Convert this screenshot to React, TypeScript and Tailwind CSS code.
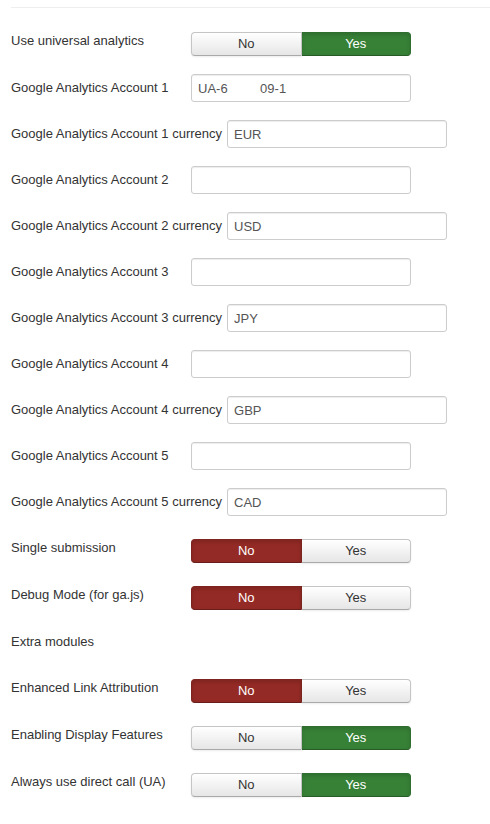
import React from 'react';

type Row =
  | { kind: 'toggle'; label: string; value: 'yes' | 'no' }
  | { kind: 'input'; label: string; value: string }
  | { kind: 'empty'; label: string };

const rows: Row[] = [
  { kind: 'toggle', label: 'Use universal analytics', value: 'yes' },
  { kind: 'input', label: 'Google Analytics Account 1', value: 'UA-6         09-1' },
  { kind: 'input', label: 'Google Analytics Account 1 currency', value: 'EUR' },
  { kind: 'input', label: 'Google Analytics Account 2', value: '' },
  { kind: 'input', label: 'Google Analytics Account 2 currency', value: 'USD' },
  { kind: 'input', label: 'Google Analytics Account 3', value: '' },
  { kind: 'input', label: 'Google Analytics Account 3 currency', value: 'JPY' },
  { kind: 'input', label: 'Google Analytics Account 4', value: '' },
  { kind: 'input', label: 'Google Analytics Account 4 currency', value: 'GBP' },
  { kind: 'input', label: 'Google Analytics Account 5', value: '' },
  { kind: 'input', label: 'Google Analytics Account 5 currency', value: 'CAD' },
  { kind: 'toggle', label: 'Single submission', value: 'no' },
  { kind: 'toggle', label: 'Debug Mode (for ga.js)', value: 'no' },
  { kind: 'empty', label: 'Extra modules' },
  { kind: 'toggle', label: 'Enhanced Link Attribution', value: 'no' },
  { kind: 'toggle', label: 'Enabling Display Features', value: 'yes' },
  { kind: 'toggle', label: 'Always use direct call (UA)', value: 'yes' },
];

const idle =
  'bg-gradient-to-b from-white to-[#e6e6e6] text-[#333] border-[#c5c5c5] border-b-[#a9a9a9] shadow-[inset_0_1px_0_rgba(255,255,255,0.3),0_1px_2px_rgba(0,0,0,0.08)]';

function YesNo({ value }: { value: 'yes' | 'no' }) {
  const noActive = value === 'no';
  return (
    <div className="mt-[5px] flex h-[24px] w-[220px]">
      <button
        className={`flex-1 rounded-l-[4px] border text-[13px] leading-[22px] ${
          noActive
            ? 'bg-[#942a25] text-white border-[#7d2420] border-b-[#6a1e1b] shadow-[inset_0_2px_4px_rgba(0,0,0,0.15)]'
            : idle
        }`}
      >
        No
      </button>
      <button
        className={`flex-1 rounded-r-[4px] border border-l-0 text-[13px] leading-[22px] ${
          !noActive
            ? 'bg-[#378137] text-white border-[#2f6e2f] border-b-[#275c27] shadow-[inset_0_2px_4px_rgba(0,0,0,0.15)]'
            : idle
        }`}
      >
        Yes
      </button>
    </div>
  );
}

export default function App() {
  return (
    <div
      className="min-h-screen bg-white pl-[11px] pt-[7px] text-[13px] text-[#333]"
      style={{ fontFamily: '"Liberation Sans", Arial, sans-serif' }}
    >
      <div className="border-t border-[#eeeeee] pt-[19px]">
        {rows.map((r) => (
          <div key={r.label} className="mb-[18px] flex items-start">
            <label className="min-w-[180px] whitespace-nowrap pr-[5px] pt-[5px] leading-[18px]">
              {r.label}
            </label>
            {r.kind === 'toggle' && <YesNo value={r.value} />}
            {r.kind === 'input' && (
              <input
                readOnly
                value={r.value}
                className="h-[28px] w-[220px] whitespace-pre rounded-[3px] border border-[#cccccc] bg-white px-[6px] text-[13px] text-[#555] shadow-[inset_0_1px_1px_rgba(0,0,0,0.075)] outline-none"
              />
            )}
            {r.kind === 'empty' && <div className="h-[28px]" />}
          </div>
        ))}
      </div>
    </div>
  );
}
